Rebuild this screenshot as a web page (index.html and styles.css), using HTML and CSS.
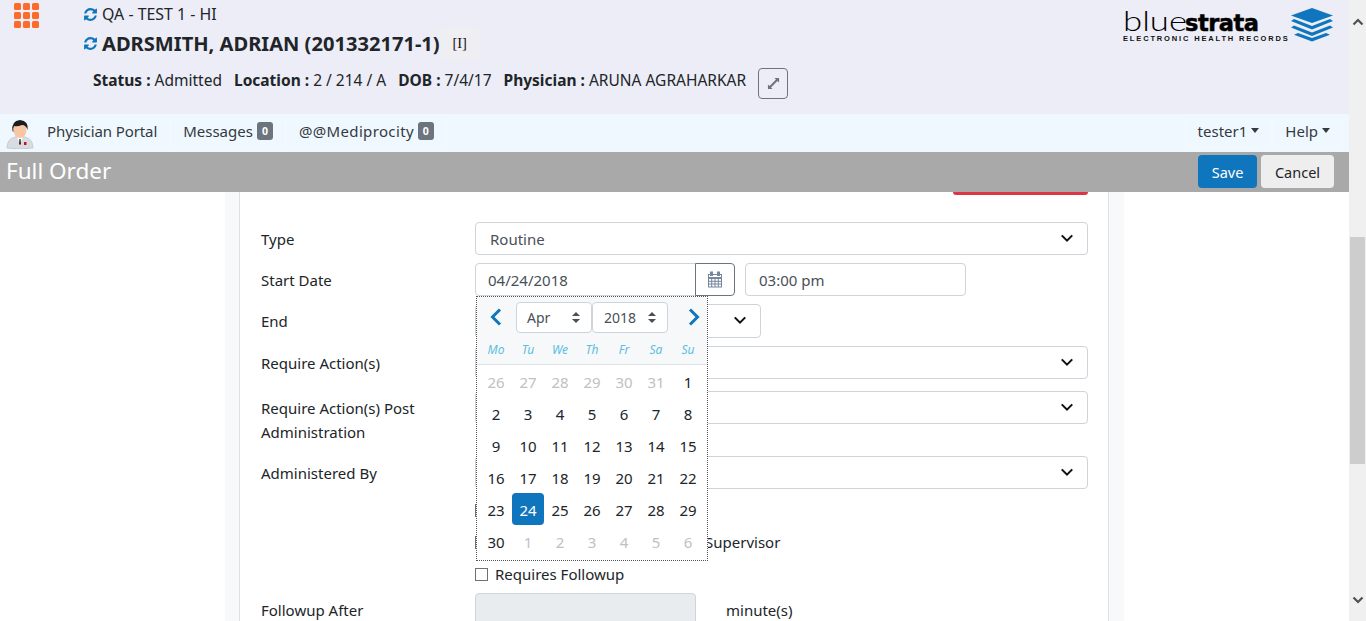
FILE: index.html
```html
<!DOCTYPE HTML>
<html>
<head>
<title>Full Order</title>
<link rel="stylesheet" href="styles.css">
</head>
<body>
<svg class="iconDefs" width="0" height="0">
  <symbol id="refresh" viewBox="0 0 1792 1792"><path d="M1639 1056q0 5-1 7-64 268-268 434.5t-478 166.5q-146 0-282.5-55t-243.5-157l-129 129q-19 19-45 19t-45-19-19-45v-448q0-26 19-45t45-19h448q26 0 45 19t19 45-19 45l-137 137q71 66 161 102t187 36q134 0 250-65t186-179q11-17 53-117 8-23 30-23h192q13 0 22.5 9.5t9.5 22.5zm25-800v448q0 26-19 45t-45 19h-448q-26 0-45-19t-19-45 19-45l138-138q-148-137-349-137-134 0-250 65t-186 179q-11 17-53 117-8 23-30 23h-199q-13 0-22.5-9.5t-9.5-22.5v-7q65-268 270-434.5t480-166.5q146 0 284 55.5t245 156.5l130-129q19-19 45-19t45 19 19 45z"/></symbol>
  <symbol id="chevron" viewBox="0 0 16 10"><path d="M2 2 L8 8 L14 2" fill="none" stroke="currentColor" stroke-width="2.4"/></symbol>
</svg>

<div class="app">
  <div class="main">
    <header class="patientHeader">
      <div class="appGrid">
        <i></i><i></i><i></i><i></i><i></i><i></i><i></i><i></i><i></i>
      </div>
      <div class="patientInfo">
        <div class="facility"><svg class="refreshIcon"><use href="#refresh"/></svg>QA - TEST 1 - HI</div>
        <div class="patientName">
          <svg class="refreshIcon"><use href="#refresh"/></svg><b>ADRSMITH, ADRIAN (201332171-1)</b><span class="flagBox">[I]</span>
        </div>
        <div class="patientMeta">
          <span><b>Status :</b> Admitted</span>
          <span><b>Location :</b> 2 / 214 / A</span>
          <span><b>DOB :</b> 7/4/17</span>
          <span><b>Physician :</b> ARUNA AGRAHARKAR</span>
          <button class="expandButton">
            <svg width="13" height="13" viewBox="0 0 14 14"><path d="M8 1H13V6L11.2 4.3L4.3 11.2L6 13H1V8L2.8 9.7L9.7 2.8Z" fill="#6c757d"/></svg>
          </button>
        </div>
      </div>
      <div class="logo">
        <div class="logoText">
          <div class="logoWord"><span class="logoBlue">blue</span><span class="logoStrata">strata</span></div>
          <div class="logoSub">ELECTRONIC HEALTH RECORDS</div>
        </div>
        <svg width="44" height="34" viewBox="0 0 44 34">
          <polygon points="22,0 43,7.5 22,15 1,7.5" fill="#0f75bc"/>
          <polygon points="4,11 22,18 40,11 43,13 22,21.5 1,13" fill="#0f75bc"/>
          <polygon points="4,17.5 22,24.5 40,17.5 43,19.5 22,28 1,19.5" fill="#0f75bc"/>
          <polygon points="8,25 22,30 36,25 40,26.8 22,33.5 4,26.8" fill="#0f75bc"/>
        </svg>
      </div>
    </header>

    <nav class="topNav">
      <svg class="avatar" width="28" height="30" viewBox="0 0 28 30">
        <path d="M1 29 Q1 20 9 18 L19 18 Q27 20 27 29 Q14 31 1 29Z" fill="#d9dde0" stroke="#b5babd" stroke-width=".6"/>
        <path d="M11 18 L14 25 L17 18Z" fill="#fff"/>
        <path d="M13.4 20 H14.6 L15 25 L14 26 L13 25Z" fill="#333"/>
        <rect x="18" y="23" width="2.5" height="3" fill="#c8102e"/>
        <ellipse cx="14" cy="11" rx="6.5" ry="8" fill="#f7c6a3"/>
        <path d="M6.5 12 Q5 2 14 1 Q23 2 21.5 11 Q20 6 16 6 Q11 8 8 7 Q7 9 7.5 13Z" fill="#1c1c1c"/>
      </svg>
      <a class="navItem navPortal">Physician Portal</a>
      <a class="navItem">Messages <span class="badge">0</span></a>
      <a class="navItem navMedi">@@Mediprocity <span class="badge">0</span></a>
      <div class="navRight">
        <a class="navItem">tester1<span class="caret"></span></a>
        <a class="navItem">Help<span class="caret"></span></a>
      </div>
    </nav>

    <div class="titleBar">
      <h1>Full Order</h1>
      <div class="titleActions">
        <button class="btnSave">Save</button>
        <button class="btnCancel">Cancel</button>
      </div>
    </div>

    <div class="content">
      <div class="orderPanel">
        <div class="orderCard">
          <div class="redBar"></div>

          <div class="formRow rowType">
            <label>Type</label>
            <div class="selectBox">Routine<svg class="selectArrow"><use href="#chevron"/></svg></div>
          </div>

          <div class="formRow rowStart">
            <label>Start Date</label>
            <div class="dateGroup">
              <div class="dateInput">04/24/2018</div>
              <button class="calButton">
                <svg width="16" height="17" viewBox="0 0 16 17" fill="none" stroke="#76869c" stroke-width="1">
                  <rect x="1.5" y="3.5" width="13" height="12.5"/>
                  <path d="M1.5 6.5H14.5M1.5 7.5H14.5M1.5 10.3H14.5M1.5 13H14.5M4.7 7V16M8 7V16M11.3 7V16"/>
                  <rect x="3.5" y="1" width="2" height="3.5" fill="#76869c"/>
                  <rect x="10.5" y="1" width="2" height="3.5" fill="#76869c"/>
                </svg>
              </button>
              <div class="timeInput">03:00 pm</div>
            </div>

            <div class="datePicker">
              <div class="pickerHead">
                <svg class="pickerArrow" width="14" height="20" viewBox="0 0 14 20"><path d="M11 2.5 L3.5 10 L11 17.5" fill="none" stroke="#0f75bc" stroke-width="3"/></svg>
                <div class="pickerSelects">
                  <div class="pickerSelect monthSelect">Apr<span class="updown"></span></div>
                  <div class="pickerSelect yearSelect">2018<span class="updown"></span></div>
                </div>
                <svg class="pickerArrow" width="14" height="20" viewBox="0 0 14 20"><path d="M3 2.5 L10.5 10 L3 17.5" fill="none" stroke="#0f75bc" stroke-width="3"/></svg>
              </div>
              <div class="dayNames">
                <span>Mo</span><span>Tu</span><span>We</span><span>Th</span><span>Fr</span><span>Sa</span><span>Su</span>
              </div>
              <div class="dayGrid">
                <span class="off">26</span><span class="off">27</span><span class="off">28</span><span class="off">29</span><span class="off">30</span><span class="off">31</span><span>1</span>
                <span>2</span><span>3</span><span>4</span><span>5</span><span>6</span><span>7</span><span>8</span>
                <span>9</span><span>10</span><span>11</span><span>12</span><span>13</span><span>14</span><span>15</span>
                <span>16</span><span>17</span><span>18</span><span>19</span><span>20</span><span>21</span><span>22</span>
                <span>23</span><span class="today">24</span><span>25</span><span>26</span><span>27</span><span>28</span><span>29</span>
                <span>30</span><span class="off">1</span><span class="off">2</span><span class="off">3</span><span class="off">4</span><span class="off">5</span><span class="off">6</span>
              </div>
            </div>
          </div>

          <div class="formRow rowEnd">
            <label>End</label>
            <div class="selectBox endSelect"><svg class="selectArrow"><use href="#chevron"/></svg></div>
          </div>

          <div class="formRow rowAction">
            <label>Require Action(s)</label>
            <div class="selectBox"><svg class="selectArrow"><use href="#chevron"/></svg></div>
          </div>

          <div class="formRow rowPost">
            <label>Require Action(s) Post Administration</label>
            <div class="selectBox"><svg class="selectArrow"><use href="#chevron"/></svg></div>
          </div>

          <div class="formRow rowAdmin">
            <label>Administered By</label>
            <div class="selectBox"><svg class="selectArrow"><use href="#chevron"/></svg></div>
          </div>

          <div class="checkRow check1"><span class="checkBox"></span></div>
          <div class="checkRow check2"><span class="checkBox"></span><span class="checkTail">Supervisor</span></div>
          <div class="checkRow check3"><span class="checkBox"></span>Requires Followup</div>

          <div class="formRow rowFollow">
            <label>Followup After</label>
            <div class="disabledInput"></div>
            <span class="unit">minute(s)</span>
          </div>
        </div>
      </div>
    </div>
  </div>

  <div class="scrollbar">
    <svg class="scrollArrow" width="12" height="8" viewBox="0 0 12 8"><path d="M1.5 6.5 L6 2 L10.5 6.5" fill="none" stroke="#505050" stroke-width="2.2"/></svg>
    <div class="scrollTrack"><div class="scrollThumb"></div></div>
    <svg class="scrollArrow" width="12" height="8" viewBox="0 0 12 8"><path d="M1.5 1.5 L6 6 L10.5 1.5" fill="none" stroke="#505050" stroke-width="2.2"/></svg>
  </div>
</div>
</body>
</html>
```

FILE: styles.css
```css
* {
  box-sizing: border-box;
}

html, body {
  margin: 0;
  height: 100%;
  overflow: hidden;
}

body {
  font-family: "Noto Sans", "Open Sans", sans-serif;
  font-size: 15px;
  color: #212529;
  background: #fff;
}

.iconDefs {
  display: none;
}

.app {
  display: flex;
  height: 621px;
}

.main {
  flex: 1;
  min-width: 0;
  display: flex;
  flex-direction: column;
}

/* patient header */
.patientHeader {
  height: 114px;
  background: #ecedf6;
  display: flex;
  padding: 3px 14px 0 14px;
  flex: none;
}

.appGrid {
  display: grid;
  grid-template-columns: repeat(3, 7px);
  grid-auto-rows: 7px;
  gap: 2px;
  width: 25px;
  height: 25px;
}

.appGrid i {
  background: #fd6a2a;
  border-radius: 1.5px;
}

.patientInfo {
  margin-left: 44px;
  margin-top: -1px;
  flex: 1;
}

.refreshIcon {
  width: 15px;
  height: 15px;
  fill: #0f75bc;
  margin-right: 4px;
  flex: none;
}

.facility {
  display: flex;
  align-items: center;
  height: 24px;
  font-size: 15.9px;
}

.patientName {
  display: flex;
  align-items: center;
  height: 34px;
  font-size: 20.1px;
}

.patientName b {
  font-weight: 700;
}

.flagBox {
  width: 40px;
  height: 33px;
  margin-left: 0;
  font-size: 14.5px;
  font-family: "Liberation Serif", serif;
  color: #111;
  display: flex;
  align-items: center;
  justify-content: center;
  background: #eeeef3;
  border-radius: 4px;
}

.patientMeta {
  display: flex;
  align-items: center;
  margin: 7px 0 0 10px;
  height: 32px;
  font-size: 15.5px;
}

.patientMeta span {
  margin-right: 12px;
  padding-bottom: 7px;
}

.expandButton {
  width: 30px;
  height: 31px;
  margin-left: 0;
  background: transparent;
  border: 1px solid #6c757d;
  border-radius: 4px;
  padding: 0;
  display: flex;
  align-items: center;
  justify-content: center;
}

.logo {
  display: flex;
  align-items: flex-start;
  margin-top: 5px;
  margin-right: 1px;
}

.logoText {
  width: 167px;
}

.logoWord {
  display: flex;
  align-items: baseline;
  height: 25px;
  line-height: 25px;
  color: #000;
  white-space: nowrap;
}

.logoBlue {
  display: inline-block;
  width: 62px;
  font-family: "Lato", sans-serif;
  font-weight: 300;
  font-size: 28px;
  transform: scaleX(1.24);
  transform-origin: left;
}

.logoStrata {
  font-family: "DejaVu Sans", sans-serif;
  font-weight: 700;
  font-size: 22.5px;
  letter-spacing: -.5px;
  -webkit-text-stroke: .5px #000;
}

.logoSub {
  font-family: "Liberation Sans", sans-serif;
  font-weight: 700;
  font-size: 7.5px;
  letter-spacing: 1.85px;
  line-height: 12px;
  color: #111;
  white-space: nowrap;
}

/* nav */
.topNav {
  height: 38px;
  flex: none;
  background: #eff7ff;
  display: flex;
  align-items: flex-start;
  padding-top: 1px;
  padding-right: 5px;
}

.avatar {
  margin: 4px 1px 0 6px;
}

.navItem {
  height: 33px;
  display: flex;
  align-items: center;
  padding: 0 12px 2px;
  margin-right: 2px;
  color: #343a40;
  background: #f0f8ff;
  border-radius: 4px;
  box-shadow: 0 0 0 1px #f4f9ff;
  white-space: nowrap;
}

.navPortal {
  letter-spacing: -.1px;
}

.navMedi {
  letter-spacing: .35px;
}

.badge {
  background: #6c757d;
  color: #fff;
  font-size: 10.5px;
  font-weight: 700;
  width: 16px;
  height: 18px;
  border-radius: 3px;
  margin-left: 4px;
  display: flex;
  align-items: center;
  justify-content: center;
}

.navRight {
  margin-left: auto;
  display: flex;
}

.caret {
  width: 0;
  height: 0;
  margin-left: 4px;
  margin-top: -1px;
  border-left: 4.5px solid transparent;
  border-right: 4.5px solid transparent;
  border-top: 5px solid #343a40;
}

/* title bar */
.titleBar {
  height: 40px;
  flex: none;
  background: #a9a9a9;
  display: flex;
  justify-content: space-between;
  align-items: center;
  padding: 0 15px 0 6px;
}

.titleBar h1 {
  margin: -3px 0 0;
  font-size: 22.5px;
  font-weight: 400;
  color: #fff;
}

.titleActions {
  display: flex;
  gap: 4px;
  margin-top: -1px;
}

.titleActions button {
  height: 33px;
  border-radius: 4px;
  font: inherit;
  font-size: 14.5px;
  padding: 0;
  border: none;
}

.btnSave {
  width: 59px;
  background: #0f75bc;
  color: #fff;
}

.btnCancel {
  width: 73px;
  background: #eeeeee;
  color: #212529;
}

/* form */
.content {
  flex: 1;
  overflow: hidden;
  display: flex;
}

.orderPanel {
  margin-left: 225px;
  width: 899px;
  background: #f8f9fb;
  padding: 0 15px 0 14px;
}

.orderCard {
  background: #fff;
  border-left: 1px solid #dee2e6;
  border-right: 1px solid #dee2e6;
  height: 100%;
  padding: 0 20px 0 21px;
}

.redBar {
  width: 135px;
  height: 3px;
  margin-left: 692px;
  background: #dc3545;
  border-radius: 0 0 3px 3px;
  margin-bottom: 27px;
}

.formRow {
  display: flex;
  position: relative;
}

.formRow label {
  width: 214px;
  flex: none;
  line-height: 24px;
}

.selectBox {
  flex: 1;
  height: 33px;
  border: 1px solid #ced4da;
  border-radius: 4px;
  padding-left: 14px;
  line-height: 33px;
  color: #495057;
  position: relative;
  background: #fff;
}

.selectArrow {
  position: absolute;
  right: 13px;
  top: 10px;
  width: 14px;
  height: 10px;
  color: #111;
}

.rowType label { padding-top: 5px; }

.rowStart {
  margin-top: 8px;
}

.rowStart label { padding-top: 5px; }

.dateGroup {
  display: flex;
  flex: 1;
}

.dateInput {
  width: 221px;
  height: 33px;
  border: 1px solid #ced4da;
  border-radius: 4px 0 0 4px;
  padding-left: 12px;
  line-height: 33px;
  color: #495057;
}

.calButton {
  width: 40px;
  height: 33px;
  margin-left: -1px;
  padding: 0;
  background: #fff;
  border: 1px solid #6c757d;
  border-radius: 0 4px 4px 0;
  display: flex;
  align-items: center;
  justify-content: center;
}

.timeInput {
  width: 221px;
  height: 33px;
  margin-left: 10px;
  border: 1px solid #ced4da;
  border-radius: 4px;
  padding-left: 13px;
  line-height: 33px;
  color: #495057;
}

.rowEnd {
  margin-top: 8px;
}

.rowEnd label { padding-top: 5px; }

.endSelect {
  flex: none;
  width: 286px;
  height: 34px;
}

.rowAction {
  margin-top: 8px;
}

.rowAction label { padding-top: 5px; }

.rowPost {
  margin-top: 12px;
}

.rowPost label {
  padding-top: 5px;
  padding-right: 30px;
}

.rowAdmin {
  margin-top: 12px;
}

.rowAdmin label { padding-top: 5px; }

.checkRow {
  display: flex;
  align-items: center;
  margin-left: 214px;
  height: 24px;
}

.check1 { margin-top: 9px; }
.check2 { margin-top: 8px; }
.check3 { margin-top: 8px; }

.checkBox {
  width: 13px;
  height: 13px;
  border: 1px solid #707070;
  background: #fff;
  margin-right: 7px;
  flex: none;
}

/* only the end of this label shows past the open date picker */
.checkTail {
  margin-left: 210px;
}

.rowFollow {
  margin-top: 7px;
}

.rowFollow label { padding-top: 5px; }

.disabledInput {
  width: 221px;
  height: 34px;
  background: #e9ecef;
  border: 1px solid #ced4da;
  border-radius: 4px;
}

.unit {
  margin-left: 30px;
  line-height: 24px;
  padding-top: 5px;
}

/* date picker popup */
.datePicker {
  position: absolute;
  left: 215px;
  top: 33px;
  width: 232px;
  height: 265px;
  background: #fff;
  border: 1px dotted #555;
  z-index: 5;
}

.pickerHead {
  height: 42px;
  background: #f7f8fa;
  display: flex;
  align-items: center;
  padding: 0 6px 2px 12px;
  justify-content: space-between;
}

.pickerSelects {
  display: flex;
  margin-left: -6px;
}

.pickerSelect {
  height: 31px;
  border: 1px solid #ced4da;
  border-radius: 4px;
  background: #fff;
  padding-left: 10px;
  line-height: 29px;
  font-size: 14px;
  position: relative;
  color: #495057;
}

.monthSelect { width: 76px; padding-left: 10px; }
.yearSelect { width: 76px; padding-left: 11px; }

.updown {
  position: absolute;
  right: 11px;
  top: 9px;
  width: 8px;
  height: 11px;
}

.updown::before,
.updown::after {
  content: "";
  position: absolute;
  left: 0;
  border-left: 4px solid transparent;
  border-right: 4px solid transparent;
}

.updown::before {
  top: 0;
  border-bottom: 4.5px solid #495057;
}

.updown::after {
  bottom: 0;
  border-top: 4.5px solid #495057;
}

.dayNames {
  height: 26px;
  background: #f7f8fa;
  border-bottom: 1px solid #dee2e6;
  display: grid;
  grid-template-columns: repeat(7, 32px);
  padding: 0 0 4px 3px;
  align-items: center;
  font-size: 12px;
  font-style: italic;
  color: #5bc0de;
  text-align: center;
}

.dayGrid {
  display: grid;
  grid-template-columns: repeat(7, 32px);
  grid-auto-rows: 32px;
  padding-left: 3px;
  text-align: center;
  line-height: 34px;
  color: #212529;
}

.dayGrid .off {
  color: #bdc1c5;
}

.dayGrid .today {
  background: #0f75bc;
  color: #fff;
  border-radius: 4px;
}

/* fake scrollbar */
.scrollbar {
  width: 17px;
  flex: none;
  background: #f0f0f0;
  display: flex;
  flex-direction: column;
  align-items: center;
  padding: 18px 0 17px;
}

.scrollArrow {
  flex: none;
}

.scrollTrack {
  flex: 1;
  width: 100%;
  padding-top: 211px;
}

.scrollThumb {
  width: 15px;
  height: 227px;
  margin-left: 1px;
  background: #cdcdcd;
}
```
